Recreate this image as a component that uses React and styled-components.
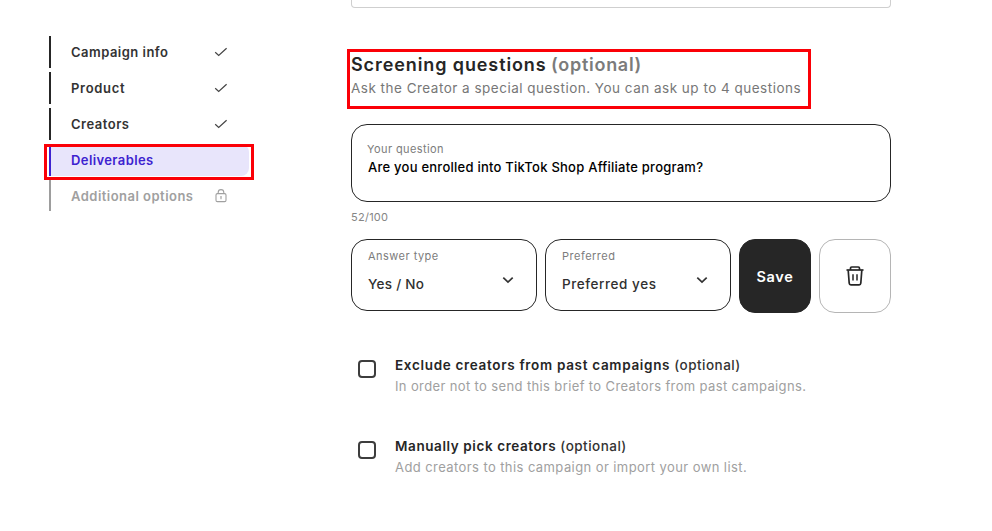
import React from "react";
import styled, { createGlobalStyle } from "styled-components";

const GlobalStyle = createGlobalStyle`
  *, *::before, *::after { box-sizing: border-box; }
  body {
    margin: 0;
    background: #fff;
    color: #262626;
    font-family: "Inter", sans-serif;
    overflow: hidden;
  }
`;

const Page = styled.div`
  display: flex;
  align-items: flex-start;
  gap: 102px;
  width: 992px;
  height: 531px;
  padding-left: 49px;
  overflow: hidden;
`;

const Steps = styled.nav`
  display: flex;
  flex-direction: column;
  gap: 4px;
  flex: none;
  width: 200px;
  padding-top: 36px;
`;

const stepColors = {
  done: { line: "#262626", text: "#333333", fill: "transparent" },
  active: { line: "#3d22d0", text: "#3d22d0", fill: "#e8e5fb" },
  locked: { line: "#9d9d9d", text: "#a0a0a0", fill: "transparent" },
};

const StepItem = styled.div`
  position: relative;
  display: flex;
  align-items: center;
  justify-content: space-between;
  height: ${(p) => (p.$state === "locked" ? 31 : 32)}px;
  padding: 0 21px 0 20px;
  border-left: 2px solid ${(p) => stepColors[p.$state].line};
  border-radius: ${(p) => (p.$state === "active" ? "0 8px 8px 0" : "0")};
  background: ${(p) => stepColors[p.$state].fill};
  color: ${(p) => stepColors[p.$state].text};
`;

const StepLabel = styled.span`
  font-size: 13px;
  font-weight: 600;
  line-height: 32px;
  letter-spacing: ${(p) => p.$spacing}px;
  white-space: nowrap;
`;

const Highlight = styled.div`
  position: absolute;
  top: ${(p) => p.$top}px;
  left: ${(p) => p.$left}px;
  width: ${(p) => p.$width}px;
  height: ${(p) => p.$height}px;
  border: 3px solid #fb0007;
  pointer-events: none;
`;

const Content = styled.main`
  display: flex;
  flex-direction: column;
  flex: none;
  width: 540px;
`;

const PreviousField = styled.div`
  height: 8px;
  border: 1px solid #cfcfcf;
  border-top: 0;
  border-radius: 0 0 4px 4px;
`;

const SectionHeader = styled.header`
  position: relative;
  height: 60px;
  margin-top: 41px;
  padding-top: 3px;
`;

const Title = styled.h2`
  margin: 0;
  font-size: 18px;
  font-weight: 600;
  line-height: 26px;
  letter-spacing: 0.9px;
  white-space: nowrap;
`;

const TitleNote = styled.span`
  color: #7b7b7b;
  letter-spacing: 0.72px;
  margin-left: -1px;
`;

const Subtitle = styled.p`
  margin: 0;
  font-size: 13.5px;
  line-height: 20px;
  letter-spacing: 0.49px;
  color: #777;
  white-space: nowrap;
`;

const QuestionBox = styled.label`
  display: flex;
  flex-direction: column;
  height: 78px;
  margin-top: 15px;
  padding: 16px 15px 0;
  border: 1px solid #262626;
  border-radius: 16px;
`;

const FieldLabel = styled.span`
  font-size: 11px;
  line-height: 16px;
  letter-spacing: ${(p) => p.$spacing}px;
  color: #7c7c7c;
`;

const QuestionText = styled.span`
  padding-left: 1px;
  font-size: 13px;
  font-weight: 500;
  line-height: 20px;
  letter-spacing: 0.245px;
  color: #000;
`;

const Counter = styled.div`
  margin-top: 7px;
  font-size: 11px;
  line-height: 16px;
  letter-spacing: 0.26px;
  color: #858585;
`;

const Controls = styled.div`
  display: grid;
  grid-template-columns: 186px 186px 72px 72px;
  align-items: start;
  gap: 8px;
  margin-top: 14px;
`;

const SelectBox = styled.div`
  display: flex;
  justify-content: space-between;
  height: 72px;
  padding: 8px 22px 0 16px;
  border: 1px solid #262626;
  border-radius: 16px;
`;

const SelectText = styled.div`
  display: flex;
  flex-direction: column;
  gap: 10px;
`;

const SelectValue = styled.span`
  font-size: 13.5px;
  font-weight: 500;
  line-height: 20px;
  letter-spacing: ${(p) => p.$spacing}px;
  color: #303030;
`;

const ChevronIcon = styled.svg`
  width: 12px;
  height: 8px;
  margin-top: 28px;
`;

const Button = styled.button`
  display: flex;
  align-items: center;
  justify-content: center;
  height: 74px;
  padding: 0;
  border: 1px solid ${(p) => (p.$solid ? "#262626" : "#b5b5b5")};
  border-radius: 16px;
  background: ${(p) => (p.$solid ? "#262626" : "#fff")};
  color: ${(p) => (p.$solid ? "#fff" : "#262626")};
  font: 600 14.5px "Inter", sans-serif;
  letter-spacing: 0.7px;
`;

const Options = styled.div`
  display: flex;
  flex-direction: column;
  gap: 39px;
  margin-top: 42px;
`;

const OptionRow = styled.label`
  display: flex;
  gap: 19px;
  height: 42px;
  padding-left: 7px;
`;

const Checkbox = styled.span`
  flex: none;
  width: 18px;
  height: 18px;
  margin-top: 5px;
  border: 2px solid #3d3d3d;
  border-radius: 4px;
`;

const OptionText = styled.span`
  display: flex;
  flex-direction: column;
  white-space: nowrap;
`;

const OptionTitle = styled.span`
  font-size: 13.5px;
  font-weight: 600;
  line-height: 21px;
  letter-spacing: ${(p) => p.$spacing}px;
`;

const OptionNote = styled.span`
  font-weight: 500;
  letter-spacing: 0.47px;
  color: #333;
`;

const OptionDescription = styled.span`
  font-size: 13px;
  line-height: 21px;
  letter-spacing: ${(p) => p.$spacing}px;
  color: #a0a0a0;
`;

const CheckIcon = () => (
  <svg width="14" height="10" viewBox="0 0 14 10" fill="none" stroke="#444" strokeWidth="1.2">
    <path d="M1.2 5.2 4.7 8.5 12.6 1.2" />
  </svg>
);

const LockIcon = () => (
  <svg width="14" height="16" viewBox="0 0 14 16" fill="none" stroke="#a0a0a0" strokeWidth="1.1">
    <rect x="2" y="5.6" width="10" height="8" rx="1.4" />
    <path d="M4.2 5.6V4.4a2.8 2.8 0 0 1 5.6 0v1.2" />
    <path d="M7 8.3v3M6.2 8.7h1.6" />
  </svg>
);

const TrashIcon = () => (
  <svg width="20" height="22" viewBox="0 0 20 22" fill="none" stroke="#262626" strokeWidth="1.7">
    <path d="M1.5 5h17" />
    <path d="M5.5 5V3.2Q5.5 2 6.7 2h6.6q1.2 0 1.2 1.2V5" />
    <path d="M3.2 5.2 4.2 18.2q.1 1.6 1.7 1.6h8.2q1.6 0 1.7-1.6L16.8 5.2" />
    <path d="M8 9.2v6.2M12 9.2v6.2" strokeWidth="1.5" />
  </svg>
);

const steps = [
  { label: "Campaign info", state: "done", spacing: 0.48 },
  { label: "Product", state: "done", spacing: 0.7 },
  { label: "Creators", state: "done", spacing: 0.51 },
  { label: "Deliverables", state: "active", spacing: 0.4 },
  { label: "Additional options", state: "locked", spacing: 0.475 },
];

const selects = [
  { label: "Answer type", labelSpacing: 0.47, value: "Yes / No", spacing: 0.28 },
  { label: "Preferred", labelSpacing: 0.5, value: "Preferred yes", spacing: 0.56 },
];

const options = [
  {
    title: "Exclude creators from past campaigns",
    spacing: 0.68,
    description: "In order not to send this brief to Creators from past campaigns.",
    descriptionSpacing: 0.372,
  },
  {
    title: "Manually pick creators",
    spacing: 0.59,
    description: "Add creators to this campaign or import your own list.",
    descriptionSpacing: 0.415,
  },
];

export default function App() {
  return (
    <>
      <GlobalStyle />
      <Page>
        <Steps>
          {steps.map(({ label, state, spacing }) => (
            <StepItem key={label} $state={state}>
              <StepLabel $spacing={spacing}>{label}</StepLabel>
              {state === "done" && <CheckIcon />}
              {state === "locked" && <LockIcon />}
              {state === "active" && <Highlight $top={0} $left={-7} $width={210} $height={36} />}
            </StepItem>
          ))}
        </Steps>
        <Content>
          <PreviousField />
          <SectionHeader>
            <Title>
              Screening questions <TitleNote>(optional)</TitleNote>
            </Title>
            <Subtitle>Ask the Creator a special question. You can ask up to 4 questions</Subtitle>
            <Highlight $top={0} $left={-4} $width={464} $height={60} />
          </SectionHeader>
          <QuestionBox>
            <FieldLabel $spacing={0.4}>Your question</FieldLabel>
            <QuestionText>Are you enrolled into TikTok Shop Affiliate program?</QuestionText>
          </QuestionBox>
          <Counter>52/100</Counter>
          <Controls>
            {selects.map((s) => (
              <SelectBox key={s.label}>
                <SelectText>
                  <FieldLabel $spacing={s.labelSpacing}>{s.label}</FieldLabel>
                  <SelectValue $spacing={s.spacing}>{s.value}</SelectValue>
                </SelectText>
                <ChevronIcon viewBox="0 0 12 8" fill="none" stroke="#333" strokeWidth="1.7">
                  <path d="M1.3 1.6 6 6.1l4.7-4.5" />
                </ChevronIcon>
              </SelectBox>
            ))}
            <Button $solid>Save</Button>
            <Button aria-label="Delete question">
              <TrashIcon />
            </Button>
          </Controls>
          <Options>
            {options.map((o) => (
              <OptionRow key={o.title}>
                <Checkbox />
                <OptionText>
                  <OptionTitle $spacing={o.spacing}>
                    {o.title} <OptionNote>(optional)</OptionNote>
                  </OptionTitle>
                  <OptionDescription $spacing={o.descriptionSpacing}>{o.description}</OptionDescription>
                </OptionText>
              </OptionRow>
            ))}
          </Options>
        </Content>
      </Page>
    </>
  );
}
